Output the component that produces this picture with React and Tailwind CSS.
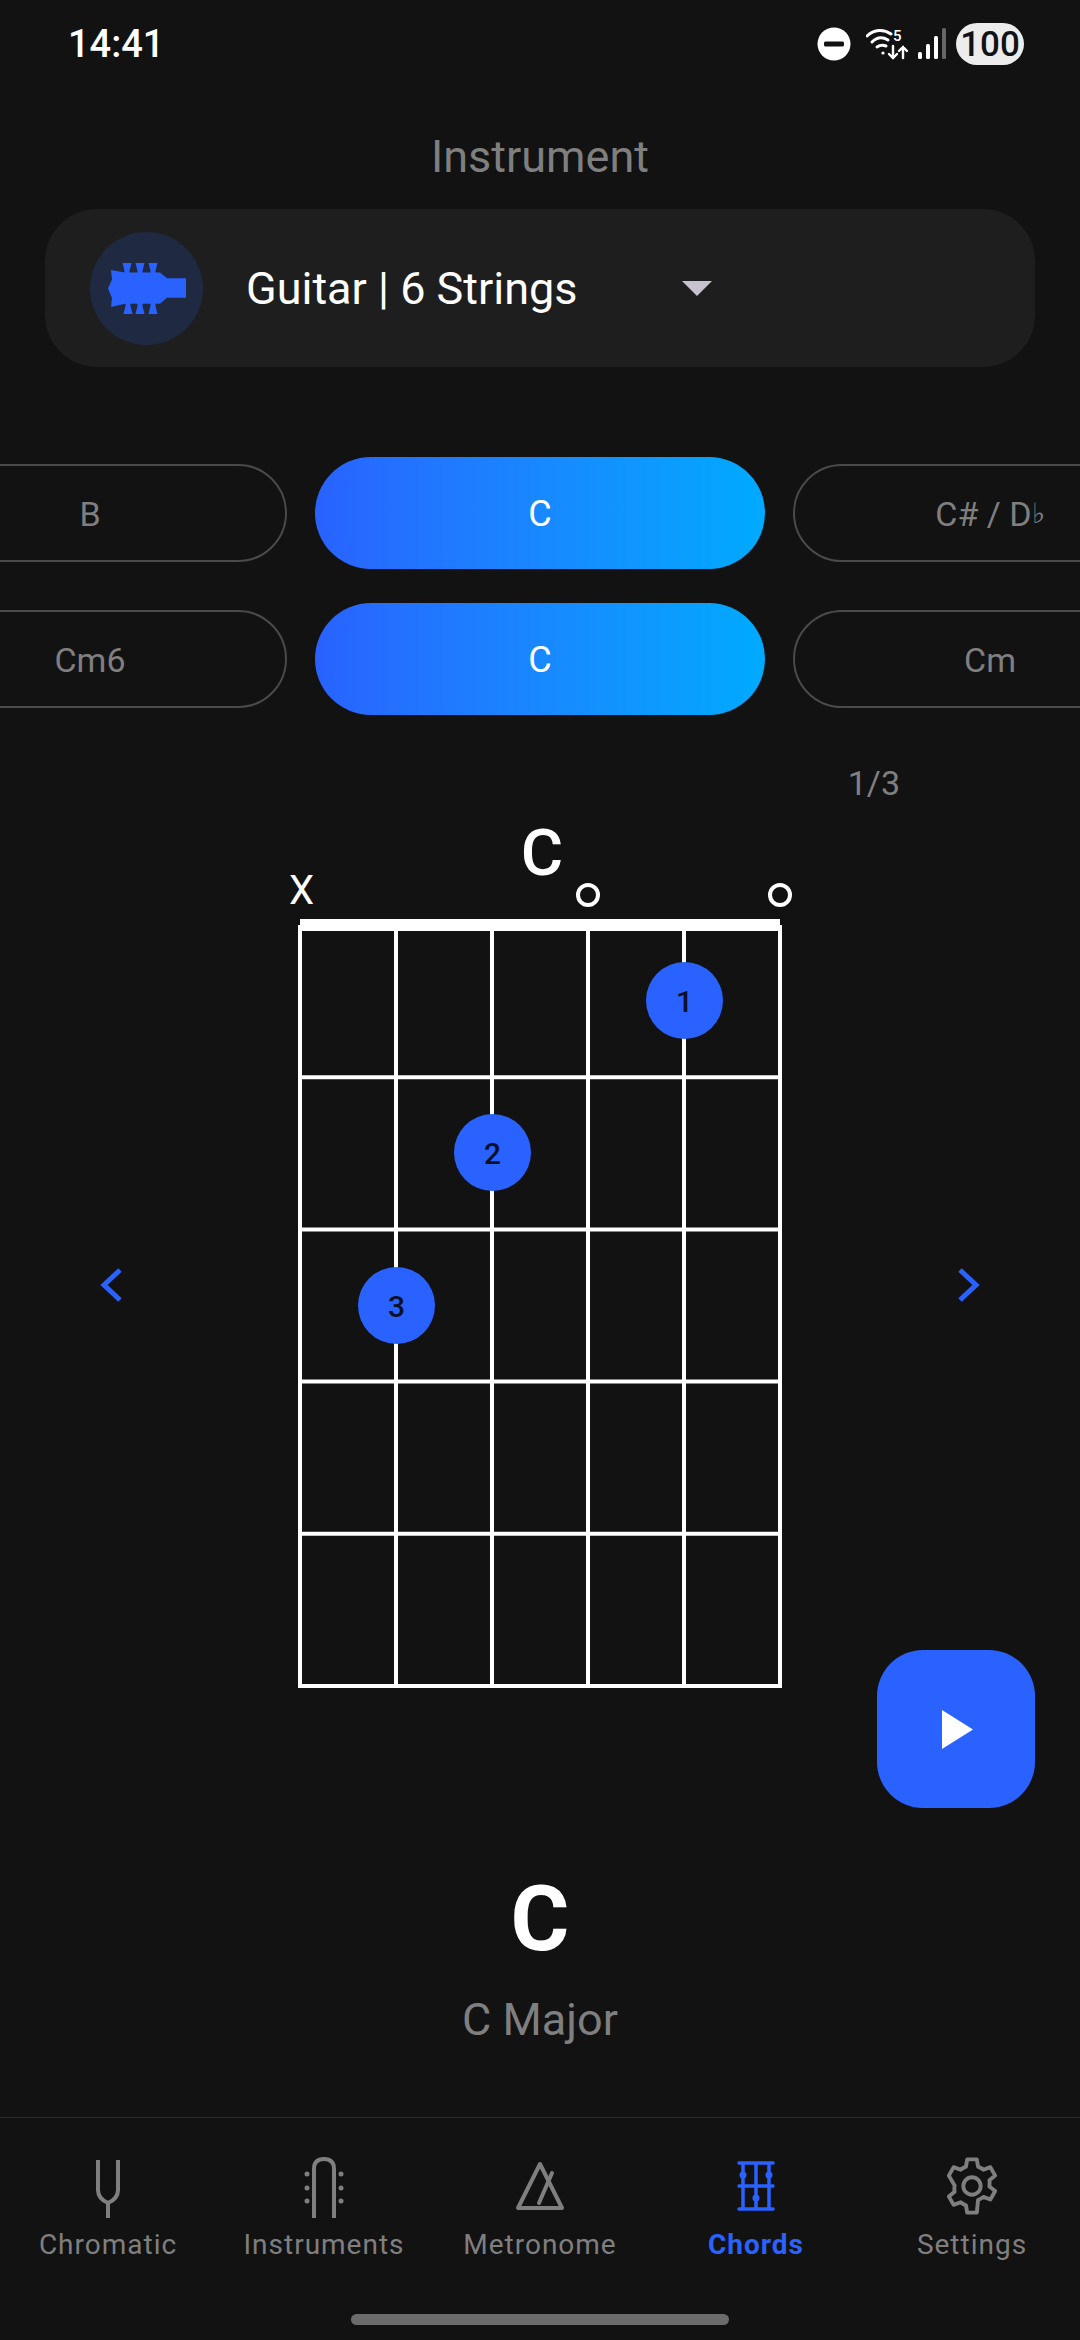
const roboto = { fontFamily: 'Roboto, sans-serif' }

const gridLines = () => {
  const out = []
  for (let i = 0; i < 6; i++) {
    out.push(<line key={'v' + i} x1={2 + i * 96} y1={6} x2={2 + i * 96} y2={769} stroke="white" strokeWidth="4" />)
  }
  for (let i = 1; i < 6; i++) {
    const y = 6 + i * 152.2
    out.push(<line key={'h' + i} x1={0} y1={y} x2={484} y2={y} stroke="white" strokeWidth="4" />)
  }
  return out
}

function FretDot({ n, className }) {
  return (
    <div className={`absolute w-[77px] h-[77px] rounded-full bg-[#2962ff] flex items-center justify-center pt-[2px] text-[30px] font-medium text-[#0b1026] ${className}`}>
      {n}
    </div>
  )
}

function NavItem({ label, active, children }) {
  return (
    <div className="flex-1 flex flex-col items-center">
      <div className="h-[66px] flex items-center justify-center">{children}</div>
      <span className={`mt-[6px] text-[28px] leading-[40px] tracking-[1px] ${active ? 'text-[#2962ff] font-bold' : 'text-[#7f7f7f]'}`}>{label}</span>
    </div>
  )
}

const chordRows = [
  ['B', 'C', <>C# / D<span className="text-[28px]">♭</span></>],
  ['Cm6', 'C', 'Cm'],
]

export default function App() {
  return (
    <div style={roboto} className="relative w-[1080px] h-[2340px] bg-[#121212] overflow-hidden flex flex-col">
      {/* status bar */}
      <div className="h-[88px] flex items-center justify-between pl-[68px] pr-[56px]">
        <span className="text-[38px] font-medium text-white leading-none">14:41</span>
        <div className="flex items-center">
          <svg width="34" height="34" viewBox="0 0 34 34" className="mr-[15px]">
            <circle cx="17" cy="17" r="16.5" fill="white" />
            <rect x="7" y="14.5" width="20" height="5" rx="1.5" fill="#121212" />
          </svg>
          <svg width="44" height="34" viewBox="0 0 44 34" fill="none" stroke="white" strokeWidth="3" strokeLinecap="round" className="mr-[8px]">
            <path d="M1 9c7-7 17-7 24-2" />
            <path d="M6 15c5-5 11-5 16-2" />
            <path d="M11 20c3-2 6-2 9-1" />
            <circle cx="17" cy="26" r="1.6" fill="white" stroke="none" />
            <path d="M27 19v12M23 27l4 4 4-4" strokeWidth="2.4" />
            <path d="M37 31V20M33 24l4-4 4 4" strokeWidth="2.4" />
            <text x="27" y="14" fontSize="15" fontWeight="500" fill="white" stroke="none">5</text>
          </svg>
          <svg width="28" height="32" viewBox="0 0 28 32" className="mr-[10px]">
            <rect x="0" y="24" width="4" height="7" rx="1.5" fill="white" />
            <rect x="8" y="16" width="4" height="15" rx="1.5" fill="white" />
            <rect x="16" y="8" width="4" height="23" rx="1.5" fill="white" />
            <rect x="24" y="0" width="4" height="31" rx="1.5" fill="#666" />
          </svg>
          <div className="w-[68px] h-[42px] rounded-full bg-[#ececec] flex items-center justify-center text-[35px] font-medium text-[#121212] leading-none">100</div>
        </div>
      </div>

      <div className="mt-[37px] text-center text-[45px] leading-[64px] text-[#7f7f7f]">Instrument</div>

      {/* instrument selector */}
      <div className="mt-[20px] mx-[45px] h-[158px] rounded-[52px] bg-[#1e1e1e] flex items-center pl-[45px]">
        <div className="w-[113px] h-[113px] rounded-full bg-[#1f2a42] flex items-center justify-center">
          <svg width="78" height="51" viewBox="0 0 78 51" fill="#2962ff">
            <path d="M3 7l14 2.6h35l7 5.7h19v19.4H59l-7 6H17L3 44l1-9-4-9.5 4-9z" />
            <path d="M14.5 0h9l-2 8v3h-5V8zM27.5 0h9l-2 8v3h-5V8zM40.5 0h9l-2 8v3h-5V8z" />
            <path d="M17.5 40h5v3l2 8h-9l2-8zM29.5 40h5v3l2 8h-9l2-8zM42.5 40h5v3l2 8h-9l2-8z" />
          </svg>
        </div>
        <span className="ml-[43px] text-[45px] text-white leading-none">Guitar | 6 Strings</span>
        <svg width="30" height="15" viewBox="0 0 30 15" className="ml-[104px]">
          <path d="M0 0h30L15 15z" fill="#c6c2cf" />
        </svg>
      </div>

      {/* chord pickers */}
      <div className="mt-[90px] flex flex-col gap-[34px] overflow-hidden">
        {chordRows.map(row => (
          <div key={row[0]} className="flex items-center justify-center gap-[28px]">
            <div className="w-[394px] h-[98px] shrink-0 rounded-[49px] border-2 border-[#4a4a4a] flex items-center justify-center pt-[2px] text-[34px] text-[#7f7f7f]">{row[0]}</div>
            <div className="w-[450px] h-[112px] shrink-0 rounded-[56px] bg-gradient-to-r from-[#2962ff] to-[#00aaff] flex items-center justify-center pt-[2px] text-[36px] text-white">{row[1]}</div>
            <div className="w-[394px] h-[98px] shrink-0 rounded-[49px] border-2 border-[#4a4a4a] flex items-center justify-center pt-[2px] text-[34px] text-[#7f7f7f]">{row[2]}</div>
          </div>
        ))}
      </div>

      <div className="mt-[48px] pr-[180px] text-right text-[34px] leading-[40px] text-[#7f7f7f]">1/3</div>

      {/* chord diagram */}
      <div className="h-[1067px] flex items-center justify-center">
        <svg width="32" height="36" viewBox="0 0 32 36" fill="none" stroke="#2962ff" strokeWidth="5" className="mb-[103px]">
          <path d="M24 3L8 18l16 15" />
        </svg>
        <div className="relative mx-[170px] w-[484px] h-[1067px]">
          <span className="absolute left-[222px] top-[18px] w-[44px] text-center text-[65px] font-medium text-white leading-[64px]">C</span>
          <span className="absolute left-[-9px] top-[64px] text-[40px] text-white leading-[48px]">X</span>
          <div className="absolute left-[278px] top-[80px] w-[24px] h-[24px] rounded-full border-[4px] border-white" />
          <div className="absolute left-[470px] top-[80px] w-[24px] h-[24px] rounded-full border-[4px] border-white" />
          <svg width="484" height="772" viewBox="0 0 484 772" className="absolute left-0 top-[116px]">
            {gridLines()}
            <rect x="2" y="0" width="480" height="12" fill="white" />
          </svg>
          <FretDot n="1" className="left-[348px] top-[159px]" />
          <FretDot n="2" className="left-[156px] top-[311px]" />
          <FretDot n="3" className="left-[60px] top-[464px]" />
        </div>
        <svg width="32" height="36" viewBox="0 0 32 36" fill="none" stroke="#2962ff" strokeWidth="5" className="mb-[103px]">
          <path d="M8 3l16 15L8 33" />
        </svg>
      </div>

      <div className="text-center text-[90px] font-bold text-white leading-[100px]">C</div>
      <div className="mt-[20px] text-center text-[45px] text-[#7f7f7f] leading-[60px]">C Major</div>

      {/* play button */}
      <div className="absolute left-[877px] top-[1650px] w-[158px] h-[158px] rounded-[46px] bg-[#2962ff] flex items-center justify-center">
        <svg width="31" height="39" viewBox="0 0 31 39" className="ml-[2px]">
          <path d="M0 0l31 19.5L0 39z" fill="white" />
        </svg>
      </div>

      {/* bottom nav */}
      <div className="absolute left-0 right-0 top-[2117px] border-t border-[#2a2a2a] pt-[35px] flex">
        <NavItem label="Chromatic">
          <svg width="24" height="58" viewBox="0 0 24 58" fill="none" stroke="#7f7f7f" strokeWidth="4" className="mt-[6px]">
            <path d="M2 0v30c0 6 3 10 10 13 7-3 10-7 10-13V0" />
            <path d="M12 43v15" />
          </svg>
        </NavItem>
        <NavItem label="Instruments">
          <svg width="40" height="61" viewBox="0 0 40 61" fill="none" stroke="#7f7f7f" strokeWidth="4" className="mt-[3px]">
            <path d="M10 61V12C10 5 14 2 20 2s10 3 10 10v49" />
            <circle cx="3" cy="17" r="2.5" fill="#7f7f7f" stroke="none" />
            <circle cx="3" cy="31" r="2.5" fill="#7f7f7f" stroke="none" />
            <circle cx="3" cy="44" r="2.5" fill="#7f7f7f" stroke="none" />
            <circle cx="37" cy="17" r="2.5" fill="#7f7f7f" stroke="none" />
            <circle cx="37" cy="31" r="2.5" fill="#7f7f7f" stroke="none" />
            <circle cx="37" cy="44" r="2.5" fill="#7f7f7f" stroke="none" />
          </svg>
        </NavItem>
        <NavItem label="Metronome">
          <svg width="50" height="50" viewBox="0 0 50 50" fill="none" stroke="#7f7f7f" strokeWidth="4" strokeLinejoin="round">
            <path d="M25 3L3 47h44z" />
            <path d="M24 42L37 12" strokeLinecap="round" />
          </svg>
        </NavItem>
        <NavItem label="Chords" active>
          <svg width="38" height="50" viewBox="0 0 38 50" fill="none" stroke="#2962ff" strokeWidth="3.5" strokeLinecap="round">
            <path d="M2 2h34M2 25h34M2 48h34M6 2v46M19 2v46M32 2v46" />
            <circle cx="6" cy="14" r="3.5" fill="#2962ff" stroke="none" />
            <circle cx="32" cy="14" r="3.5" fill="#2962ff" stroke="none" />
            <circle cx="19" cy="37" r="3.5" fill="#2962ff" stroke="none" />
          </svg>
        </NavItem>
        <NavItem label="Settings">
          <svg width="58" height="60" viewBox="0 0 24 24" fill="none" stroke="#7f7f7f" strokeWidth="1.6" strokeLinejoin="round">
            <circle cx="12" cy="12" r="3.6" />
            <path d="M10 1h4l.5 3a8 8 0 0 1 2.2 1.3l2.9-1.1 2 3.5-2.4 1.9a8 8 0 0 1 0 2.6l2.4 1.9-2 3.5-2.9-1.1a8 8 0 0 1-2.2 1.3L14 23h-4l-.5-3a8 8 0 0 1-2.2-1.3l-2.9 1.1-2-3.5 2.4-1.9a8 8 0 0 1 0-2.6L2.4 7.7l2-3.5 2.9 1.1A8 8 0 0 1 9.5 4z" />
          </svg>
        </NavItem>
      </div>

      {/* home indicator */}
      <div className="absolute left-[351px] top-[2314px] w-[378px] h-[11px] rounded-full bg-[#6b6b6b]" />
    </div>
  )
}
